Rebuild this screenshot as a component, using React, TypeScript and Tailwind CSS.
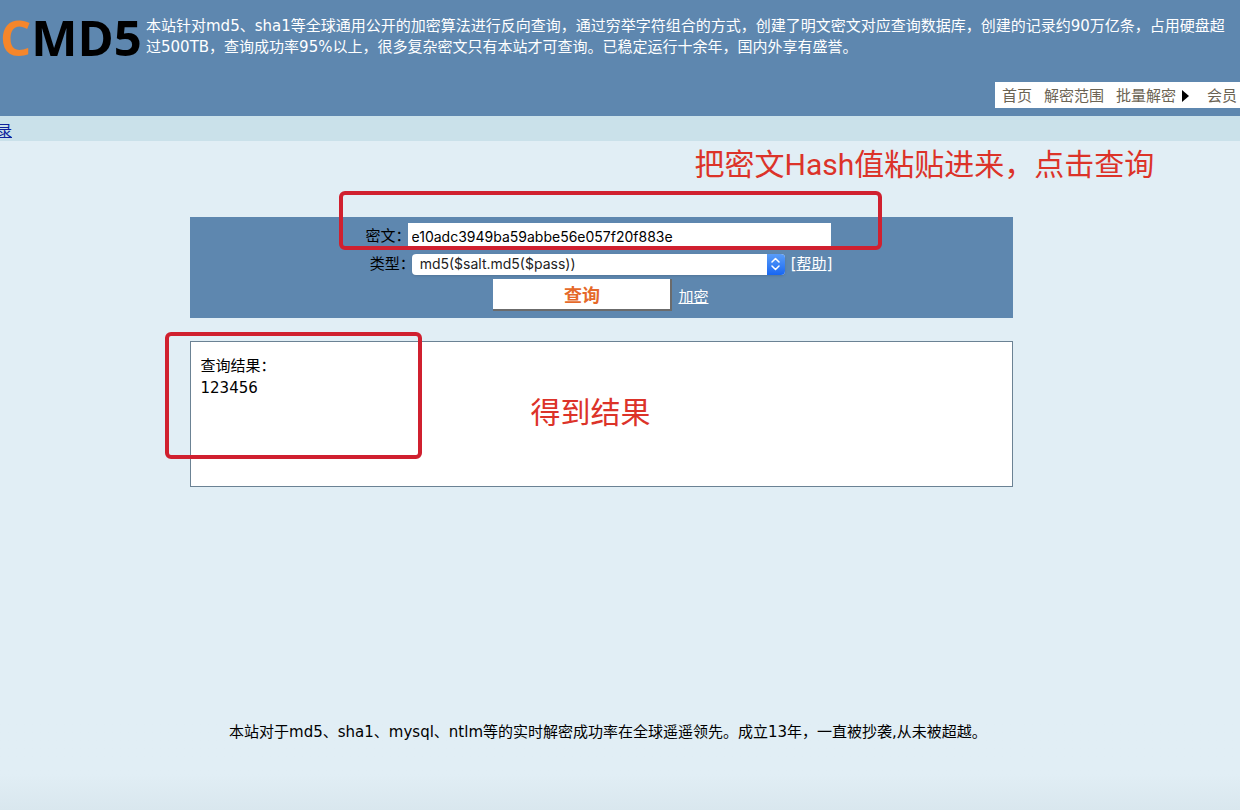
import { useState } from "react";

const menu = [
  { label: "首页" },
  { label: "解密范围" },
  { label: "批量解密", sub: true },
  { label: "会员" },
];

function Header() {
  return (
    <header className="flex h-[116px] flex-col justify-between bg-[#5e87af] pb-2">
      <div className="flex items-start">
        <h1 className="w-[146px] shrink-0 whitespace-nowrap pt-1 font-['Open_Sans',sans-serif] text-[49px] leading-[66px] font-bold text-black">
          <span className="text-[#f5862b]">C</span>MD5
        </h1>
        <p className="pt-4 pr-2 leading-[21px] text-white">
          本站针对md5、sha1等全球通用公开的加密算法进行反向查询，通过穷举字符组合的方式，创建了明文密文对应查询数据库，创建的记录约90万亿条，占用硬盘超过500TB，查询成功率95%以上，很多复杂密文只有本站才可查询。已稳定运行十余年，国内外享有盛誉。
        </p>
      </div>
      <nav className="flex h-[26px] items-center gap-3 self-end bg-white pt-px pr-[3px] pl-[7px] text-[#6b6353]">
        {menu.map((item) => (
          <a key={item.label} href="#" className="flex items-center gap-[6px] whitespace-nowrap">
            {item.label}
            {item.sub && (
              <svg className="mr-[6px] h-3 w-[7px]" viewBox="0 0 7 12">
                <path d="M0 0L7 6L0 12Z" fill="#000" />
              </svg>
            )}
          </a>
        ))}
      </nav>
    </header>
  );
}

function QueryForm() {
  const [hash, setHash] = useState("e10adc3949ba59abbe56e057f20f883e");

  return (
    <form className="relative h-[101px] bg-[#5e87af] pt-[6px]" onSubmit={(e) => e.preventDefault()}>
      <div className="flex items-center justify-center pr-[6px]">
        <label htmlFor="hash" className="w-[42px] whitespace-nowrap">密文：</label>
        <input
          id="hash"
          type="text"
          value={hash}
          onChange={(e) => setHash(e.target.value)}
          className="h-[26px] w-[423px] bg-white px-1 font-[Inter,sans-serif] text-sm leading-5 outline-none"
        />
      </div>
      <div className="mt-1 flex items-center justify-center">
        <label htmlFor="type" className="w-[42px] whitespace-nowrap">类型：</label>
        <div className="relative">
          <select
            id="type"
            className="block h-[21px] w-[373px] appearance-none rounded bg-white pr-6 pl-2 font-[Inter,sans-serif] text-sm leading-5 text-[#222] shadow-sm outline-none"
          >
            <option>md5($salt.md5($pass))</option>
            <option>md5</option>
          </select>
          <span className="pointer-events-none absolute inset-y-0 right-0 flex w-[18px] items-center justify-center rounded-r bg-gradient-to-b from-[#5a9df8] to-[#1666f2]">
            <svg className="h-[14px] w-[9px]" viewBox="0 0 9 14" fill="none" stroke="#fff" strokeWidth="1.5" strokeLinecap="round" strokeLinejoin="round">
              <path d="M1 5L4.5 1.5L8 5M1 9L4.5 12.5L8 9" />
            </svg>
          </span>
        </div>
        <a href="#" className="ml-[6px] text-white">
          [<span className="underline">帮助</span>]
        </a>
      </div>
      <div className="mt-1 flex items-center justify-center gap-[6px]">
        <button
          type="submit"
          className="h-8 w-[179px] border-r-2 border-b-2 border-[#6b6b6b] border-t-white border-l-white bg-white pt-[3px] text-lg leading-7 font-bold text-[#e5692a]"
        >
          查询
        </button>
        <a href="#" className="pt-1 text-white underline">加密</a>
      </div>
      {/* frame around the hash row */}
      <div className="pointer-events-none absolute -top-[26px] left-[149px] h-[59px] w-[543px] rounded-md border-4 border-[#d0202f]" />
      <span className="absolute -top-[75px] left-[505px] whitespace-nowrap text-3xl leading-[45px] text-[#dc3329] font-['Roboto','Noto_Sans_CJK_SC',sans-serif]">
        把密文Hash值粘贴进来，点击查询
      </span>
    </form>
  );
}

function Result() {
  return (
    <section className="relative mt-[23px] h-[146px] border border-[#6b8294] bg-white px-[10px] py-[13px] leading-[22px]">
      <h2>查询结果：</h2>
      <p>123456</p>
      {/* frame around the answer */}
      <div className="pointer-events-none absolute -top-[10px] -left-[26px] h-[127px] w-[257px] rounded-md border-4 border-[#d0202f]" />
      <span className="absolute top-[46px] left-[340px] text-3xl leading-[45px] text-[#dc3329] font-['Noto_Sans_CJK_SC',sans-serif]">
        得到结果
      </span>
    </section>
  );
}

export default function App() {
  return (
    <div className="flex min-h-screen flex-col overflow-x-hidden bg-[#e1eef5] font-['DejaVu_Sans','Noto_Sans_CJK_SC',sans-serif] text-[15px] leading-[22px] text-black">
      <Header />
      <div className="h-[25px] bg-[#cae1ea] pt-1">
        <a href="#" className="-ml-[3px] block w-4 text-[#0d1f9c] underline">录</a>
      </div>
      <main className="pt-[76px] pr-[38px]">
        <div className="mx-auto w-[823px]">
          <QueryForm />
          <Result />
        </div>
      </main>
      <footer className="mt-auto bg-gradient-to-b from-[#e1eef5] from-60% to-[#d9e7ee] pr-6 pb-[67px] text-center">
        本站对于md5、sha1、mysql、ntlm等的实时解密成功率在全球遥遥领先。成立13年，一直被抄袭,从未被超越。
      </footer>
    </div>
  );
}
